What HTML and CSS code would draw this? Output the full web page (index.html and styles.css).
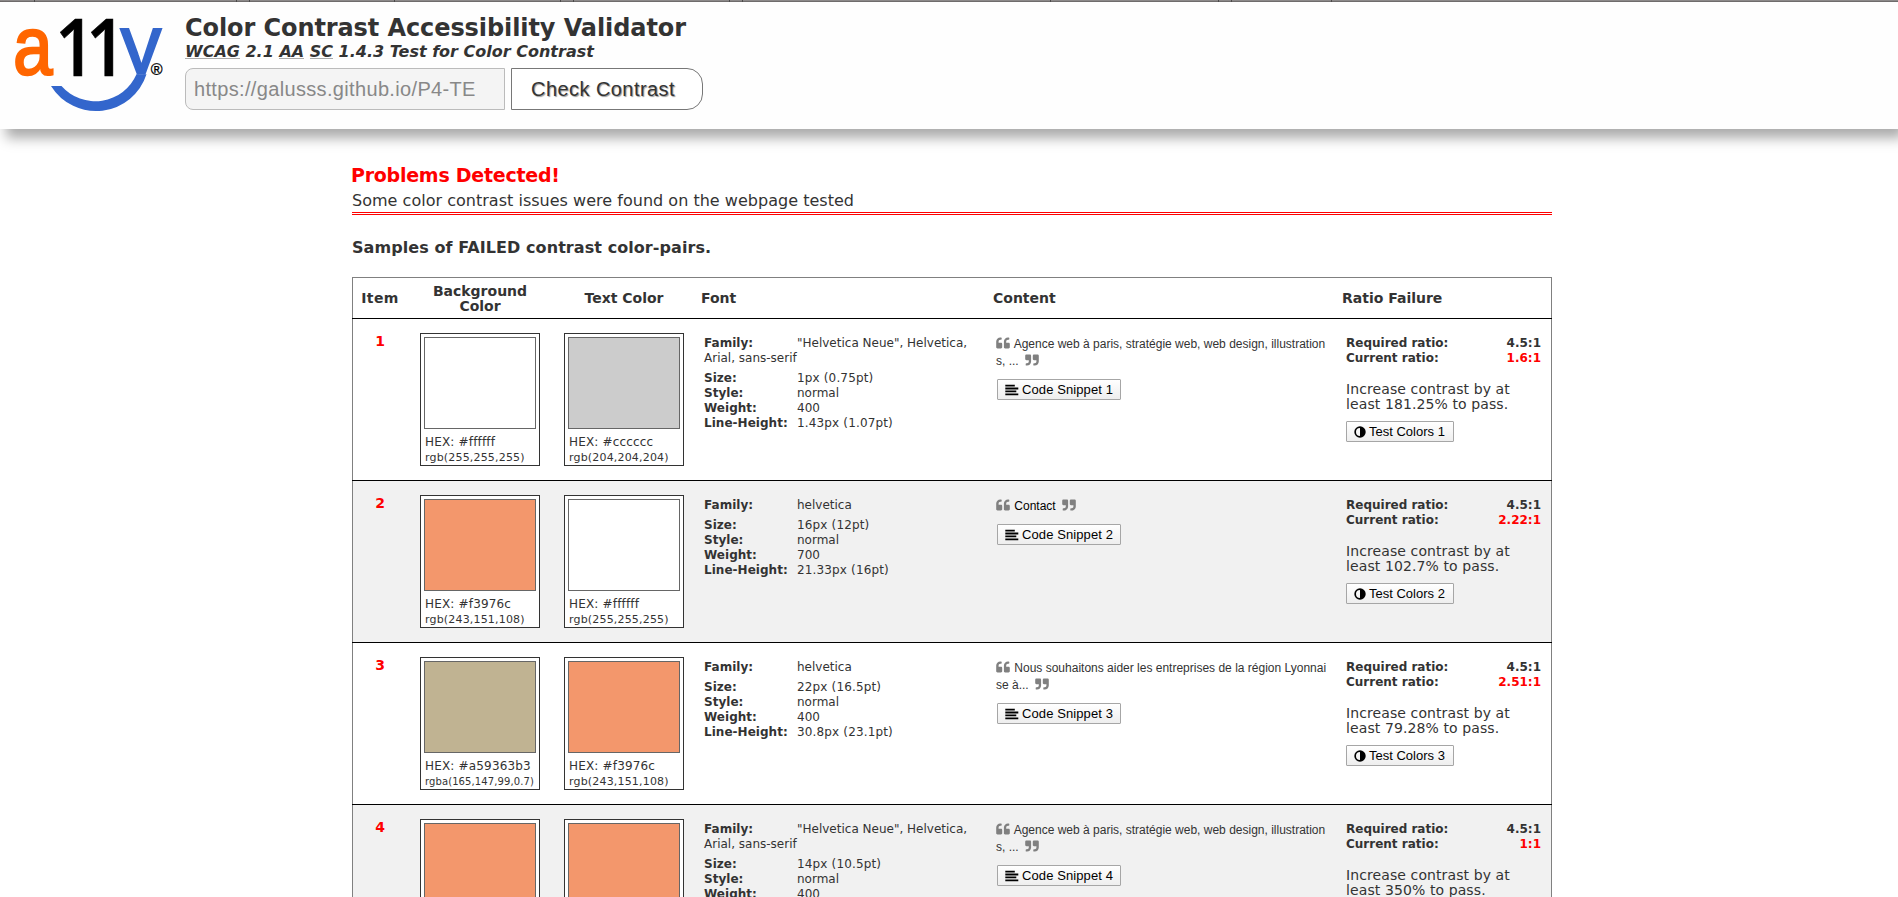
FILE: index.html
```
<!DOCTYPE html>
<html lang="en">
<head>
<meta charset="utf-8">
<title>Color Contrast Accessibility Validator</title>
<link rel="stylesheet" href="styles.css">
</head>
<body>
<svg class="defs" aria-hidden="true">
  <symbol id="quote-left" viewBox="0 0 14 12"><path d="M6.2 6.9v3.4c0 .7-.6 1.2-1.2 1.2H1.500C.8 11.500.2 11 .2 10.300V4.500C.2 2.200 2 .4 4.300.4h.8c.3 0 .6.2.6.6v1.100c0 .3-.3.6-.6.6h-.8c-1 0-1.700.8-1.700 1.700v1.300H5c.7 0 1.200.6 1.200 1.200zM13.800 6.900v3.400c0 .7-.6 1.200-1.200 1.200H9.100c-.7 0-1.200-.5-1.200-1.200V4.500C7.900 2.200 9.700.4 12 .4h.7c.4 0 .6.2.6.6v1.100c0 .3-.2.6-.6.6H12c-1 0-1.800.8-1.800 1.700v1.300h2.400c.6 0 1.200.6 1.200 1.200z"/></symbol>
  <symbol id="quote-right" viewBox="0 0 14 12"><use href="#quote-left" width="14" height="12" transform="rotate(180 7 6)"/></symbol>
  <symbol id="align-left" viewBox="0 0 14 12"><path d="M.3.8h9.500v1.800H.3zM.3 3.600h13v1.800H.3zM.3 6.500h11v1.800H.3zM.3 9.400h13v1.800H.3z"/></symbol>
  <symbol id="adjust" viewBox="0 0 12 12"><path fill-rule="evenodd" d="M6 .3a5.700 5.700 0 1 1 0 11.400A5.700 5.700 0 0 1 6 .3zm0 1.700a4 4 0 0 0 0 8z"/></symbol>
</svg>

<div class="strip"><i class="s1"></i><i class="s2"></i><i class="s3"></i><i class="s4"></i><i class="s5"></i><i class="s3"></i><i class="s6"></i><i class="s3"></i><i class="s7"></i><i class="s8"></i><i class="s3"></i><i class="s9"></i></div>

<header class="top">
  <svg class="logo" width="185" height="127" viewBox="0 2 185 127" role="img" aria-label="a11y">
    <clipPath id="y-clip"><rect x="110" y="20" width="60" height="54.500"/></clipPath>
    <text class="logo-a" transform="translate(13.300 74.300) scale(.87 1)">a</text>
    <text class="logo-11" transform="translate(55 76) scale(.88 1)">11</text>
    <g clip-path="url(#y-clip)"><text class="logo-y" transform="translate(120.500 74) scale(.96 1)">y</text></g>
    <path class="logo-smile" d="M51 86H61.500A45 45 0 0 0 136.500 74.300H146.500A53 53 0 0 1 51 86z"/>
    <text class="logo-r" x="150.700" y="75">®</text>
  </svg>
  <div class="heading">
    <h1>Color Contrast Accessibility Validator</h1>
    <p class="sub"><abbr>WCAG</abbr> 2.1 <abbr>AA</abbr> <abbr>SC</abbr> 1.4.3 Test for Color Contrast</p>
    <div class="form"><div class="url">https://galusss.github.io/P4-TE</div><button class="check">Check Contrast</button></div>
  </div>
</header>

<main>
  <h2>Problems Detected!</h2>
  <p class="summary">Some color contrast issues were found on the webpage tested</p>
  <h3>Samples of FAILED contrast color-pairs.</h3>

  <section class="table">
    <div class="row head">
      <div class="item-h">Item</div><div class="bg-h">Background<br>Color</div><div>Text Color</div><div class="font-h">Font</div><div class="content-h">Content</div><div class="ratio-h">Ratio Failure</div>
    </div>

    <div class="rule"></div>
    <div class="row">
      <div class="num">1</div>
      <div class="swatch"><div class="chip white"></div><p class="hex">HEX: #ffffff</p><p class="rgb">rgb(255,255,255)</p></div>
      <div class="swatch"><div class="chip grey"></div><p class="hex">HEX: #cccccc</p><p class="rgb">rgb(204,204,204)</p></div>
      <div class="font"><p class="family"><b>Family:</b>"Helvetica Neue", Helvetica, Arial, sans-serif</p><p><b>Size:</b><span>1px (0.75pt)</span></p><p><b>Style:</b>normal</p><p><b>Weight:</b>400</p><p><b>Line-Height:</b><span>1.43px (1.07pt)</span></p></div>
      <div class="content"><p><svg class="q"><use href="#quote-left"/></svg> Agence web à paris, stratégie web, web design, illustrations, ... <svg class="q close"><use href="#quote-right"/></svg></p><button class="snippet"><svg><use href="#align-left"/></svg>Code Snippet 1</button></div>
      <div class="ratio"><p><b>Required ratio:</b><b>4.5:1</b></p><p><b>Current ratio:</b><b class="bad">1.6:1</b></p><div class="advice">Increase contrast by at least 181.25% to pass.</div><button class="test"><svg><use href="#adjust"/></svg>Test Colors 1</button></div>
    </div>

    <div class="rule"></div>
    <div class="row even">
      <div class="num">2</div>
      <div class="swatch"><div class="chip orange"></div><p class="hex">HEX: #f3976c</p><p class="rgb">rgb(243,151,108)</p></div>
      <div class="swatch"><div class="chip white"></div><p class="hex">HEX: #ffffff</p><p class="rgb">rgb(255,255,255)</p></div>
      <div class="font"><p class="family"><b>Family:</b>helvetica</p><p><b>Size:</b><span>16px (12pt)</span></p><p><b>Style:</b>normal</p><p><b>Weight:</b>700</p><p><b>Line-Height:</b><span>21.33px (16pt)</span></p></div>
      <div class="content"><p><svg class="q"><use href="#quote-left"/></svg> <span class="dark">Contact</span> <svg class="q close"><use href="#quote-right"/></svg></p><button class="snippet"><svg><use href="#align-left"/></svg>Code Snippet 2</button></div>
      <div class="ratio"><p><b>Required ratio:</b><b>4.5:1</b></p><p><b>Current ratio:</b><b class="bad">2.22:1</b></p><div class="advice">Increase contrast by at least 102.7% to pass.</div><button class="test"><svg><use href="#adjust"/></svg>Test Colors 2</button></div>
    </div>

    <div class="rule"></div>
    <div class="row">
      <div class="num">3</div>
      <div class="swatch"><div class="chip khaki"></div><p class="hex">HEX: #a59363b3</p><p class="rgb rgba">rgba(165,147,99,0.7)</p></div>
      <div class="swatch"><div class="chip orange"></div><p class="hex">HEX: #f3976c</p><p class="rgb">rgb(243,151,108)</p></div>
      <div class="font"><p class="family"><b>Family:</b>helvetica</p><p><b>Size:</b><span>22px (16.5pt)</span></p><p><b>Style:</b>normal</p><p><b>Weight:</b>400</p><p><b>Line-Height:</b><span>30.8px (23.1pt)</span></p></div>
      <div class="content"><p><svg class="q"><use href="#quote-left"/></svg> Nous souhaitons aider les entreprises de la région Lyonnaise à... <svg class="q close"><use href="#quote-right"/></svg></p><button class="snippet"><svg><use href="#align-left"/></svg>Code Snippet 3</button></div>
      <div class="ratio"><p><b>Required ratio:</b><b>4.5:1</b></p><p><b>Current ratio:</b><b class="bad">2.51:1</b></p><div class="advice">Increase contrast by at least 79.28% to pass.</div><button class="test"><svg><use href="#adjust"/></svg>Test Colors 3</button></div>
    </div>

    <div class="rule"></div>
    <div class="row even">
      <div class="num">4</div>
      <div class="swatch"><div class="chip orange"></div></div>
      <div class="swatch"><div class="chip orange"></div></div>
      <div class="font"><p class="family"><b>Family:</b>"Helvetica Neue", Helvetica, Arial, sans-serif</p><p><b>Size:</b><span>14px (10.5pt)</span></p><p><b>Style:</b>normal</p><p><b>Weight:</b>400</p></div>
      <div class="content"><p><svg class="q"><use href="#quote-left"/></svg> Agence web à paris, stratégie web, web design, illustrations, ... <svg class="q close"><use href="#quote-right"/></svg></p><button class="snippet"><svg><use href="#align-left"/></svg>Code Snippet 4</button></div>
      <div class="ratio"><p><b>Required ratio:</b><b>4.5:1</b></p><p><b>Current ratio:</b><b class="bad">1:1</b></p><div class="advice">Increase contrast by at least 350% to pass.</div></div>
    </div>
  </section>
</main>
</body>
</html>
```

FILE: styles.css
```
* { box-sizing: border-box; }
html, body { height: 100%; }
body { margin: 0; overflow: hidden; background: #fff; color: #333; font-family: Verdana, "DejaVu Sans", sans-serif; }
h1, h2, h3, p { margin: 0; }
.defs { display: none; }

.strip { display: flex; height: 2px; background: #8b8888; border-bottom: 1px solid #6b6868; }
.strip i { height: 2px; flex: none; border-right: 1px solid #4c4a4a; }
.s1 { width: 35px; }
.s2 { width: 202px; }
.s3 { width: 13px; }
.s4 { width: 145px; }
.s5 { width: 166px; }
.s6 { width: 156px; }
.s7 { width: 308px; }
.s8 { width: 168px; }
.s9 { width: 100px; }

.top { display: flex; height: 127px; background: #fefefe; box-shadow: 6px 9px 12px #aaa; }
.logo { flex: none; display: block; }
.logo text { font-family: "Liberation Sans", Arial, sans-serif; }
.logo .logo-a { font-size: 81px; fill: #f60; stroke: #f60; stroke-width: 2.5px; }
.logo .logo-11 { font: 600 80px "Open Sans", sans-serif; letter-spacing: -10.6px; fill: #000; stroke: #000; stroke-width: .6px; }
.logo .logo-y { font-size: 85px; fill: #36c; stroke: #36c; stroke-width: 2px; }
.logo-smile { fill: #36c; }
.logo .logo-r { font-size: 16px; fill: #000; stroke: #000; stroke-width: .3px; }

.heading { padding-top: 12px; }
h1 { font-size: 24px; line-height: 28px; letter-spacing: -.09px; }
.sub { font-size: 16px; line-height: 20px; font-weight: bold; font-style: italic; }
.sub abbr { text-decoration: none; display: inline-block; height: 17px; line-height: 20px; vertical-align: top; border-bottom: 1px solid #aaa; }
.form { display: flex; gap: 6px; margin-top: 6px; font: 20px/40px "Liberation Sans", Arial, sans-serif; }
.url { width: 320px; height: 42px; padding-left: 8px; border: 1px solid #bbb; border-radius: 8px 0 0 8px; background: #f4f4f4; color: #888; letter-spacing: .34px; }
.check { width: 192px; height: 42px; padding: 0 8px 0 0; border: 1px solid #777; border-radius: 0 16px 16px 0; background: #fff; color: #333; font: inherit; letter-spacing: .44px; text-shadow: 1px 1px 1px #999; }

main { width: 1200px; margin: 33px 0 0 352px; }
h2 { color: red; font-size: 19px; line-height: 26px; letter-spacing: -.25px; margin-left: -1px; }
.summary { height: 27px; border-bottom: 3px double red; font-size: 16px; line-height: 26px; letter-spacing: .02px; }
h3 { margin: 23px 0 19px; font-size: 16px; line-height: 20px; letter-spacing: .07px; }

.table { border: 1px solid gray; }
.rule { height: 1px; margin: 0 -1px; background: #000; }
.row { display: grid; grid-template-columns: 54px 146px 142px 292px 346px 218px; height: 161px; font-size: 12px; line-height: 15px; }
.even { background: #f1f1f1; }
.head { height: 40px; align-items: center; font-size: 14px; font-weight: bold; text-align: center; }
.item-h { letter-spacing: .4px; }
.bg-h { padding-top: 2px; }
.font-h, .content-h { padding-left: 6px; text-align: left; }
.ratio-h { padding-left: 9px; text-align: left; }

.num { padding-top: 15px; color: red; font-size: 14px; font-weight: bold; text-align: center; }
.swatch { width: 120px; height: 133px; margin: 14px auto 0; padding: 3px; border: 1px solid #333; background: #fff; }
.chip { height: 92px; border: 1px solid #666; }
.white { background: #fff; }
.grey { background: #ccc; }
.orange { background: #f3976c; }
.khaki { background: #c0b392; }
.hex { margin: 6px 0 0 1px; letter-spacing: .17px; }
.rgb { margin-left: 1px; font-size: 11px; letter-spacing: .18px; }
.rgba { font-size: 10px; letter-spacing: .1px; }

.font { padding: 17px 0 0 9px; }
.font b { display: inline-block; width: 93px; letter-spacing: .03px; }
.font span { letter-spacing: .15px; }
.family { margin-bottom: 5px; }

.content { padding: 17px 5px 0 9px; }
.content p { font: 12px/17px "Liberation Sans", Arial, sans-serif; word-break: break-all; }
.dark { color: #000; }
.q { width: 14px; height: 12px; margin-right: 1px; vertical-align: -1px; fill: gray; }
.close { margin-left: 3px; }
button svg { fill: #000; }
.snippet, .test { display: flex; align-items: center; height: 21px; padding: 0 0 0 7px; border: 1px solid #a6a6a6; border-radius: 1px; background: linear-gradient(#fff, #eee); color: #000; font: 13px/19px "Liberation Sans", Arial, sans-serif; }
.snippet { width: 124px; margin: 9px 0 0 1px; letter-spacing: .1px; }
.snippet svg { width: 14px; height: 12px; margin-right: 3px; }
.test { width: 108px; margin-top: 9px; }
.test svg { width: 12px; height: 12px; margin-right: 3px; }

.ratio { padding: 17px 10px 0 13px; }
.ratio p { display: flex; justify-content: space-between; }
.bad { color: red; }
.advice { width: 175px; margin-top: 16px; font-size: 14px; letter-spacing: .1px; }
```
